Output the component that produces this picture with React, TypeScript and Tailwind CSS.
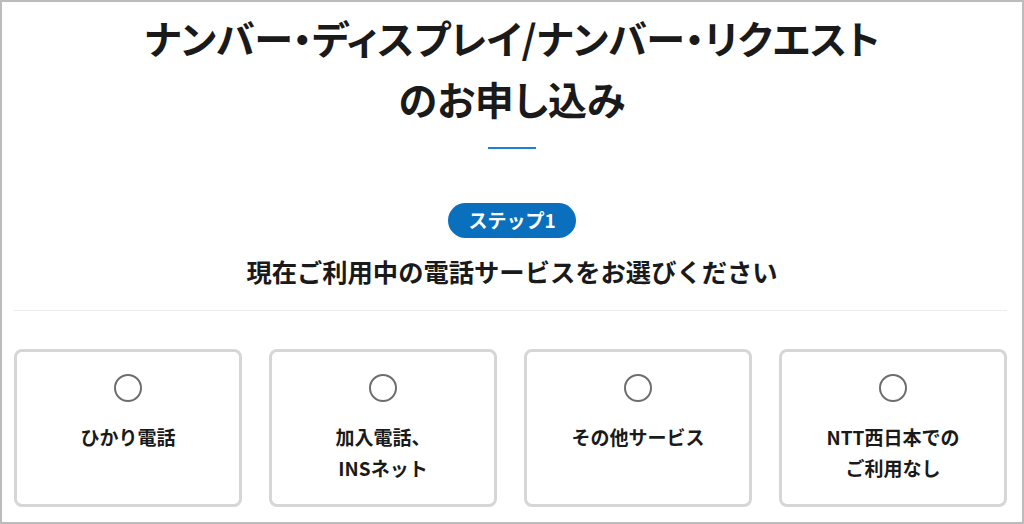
const services = [
  { id: "hikari", label: ["ひかり電話"] },
  { id: "kanyu", label: ["加入電話、", "INSネット"] },
  { id: "other", label: ["その他サービス"] },
  { id: "none", label: ["NTT西日本での", "ご利用なし"] },
];

export default function App() {
  return (
    <div
      className="w-[1024px] h-[524px] border-2 border-[#bcbcbc] bg-white text-[#1a1a1a] overflow-hidden"
      style={{ fontFamily: '"Noto Sans CJK JP", "Noto Sans", sans-serif' }}
    >
      {/* Heading */}
      <h1 className="pt-[5px] text-center text-[39px] font-bold leading-[61px] [font-feature-settings:'palt']">
        ナンバー・ディスプレイ/ナンバー・リクエスト
        <br />
        のお申し込み
      </h1>
      <div className="mx-auto mt-[18px] h-[2px] w-[48px] bg-[#1f7fcf]" />

      {/* Step */}
      <div className="mt-[54px] flex flex-col items-center">
        <span className="inline-flex h-[35px] items-center rounded-full bg-[#0a6fbd] px-[20px] text-[19px] font-bold text-white">
          ステップ1
        </span>
        <h2 className="mt-[14px] text-[25.3px] font-bold leading-[38px]">
          現在ご利用中の電話サービスをお選びください
        </h2>
      </div>

      <div className="pl-[12px] pr-[15px]">
        <div className="mt-[20px] h-px bg-[#ececec]" />

        {/* Service choices */}
        <div className="mt-[38px] grid grid-cols-4 gap-[27px]">
          {services.map((s) => (
            <label
              key={s.id}
              className="flex h-[158px] cursor-pointer flex-col items-center rounded-lg border-[3px] border-[#d6d6d6] bg-white"
            >
              <input type="radio" name="service" className="sr-only" />
              <span className="mt-[22px] h-[28px] w-[28px] rounded-full border-2 border-[#6e6e6e]" />
              <span className="mt-[19px] text-center text-[19px] font-bold leading-[31px]">
                {s.label.map((line) => (
                  <span key={line} className="block">
                    {line}
                  </span>
                ))}
              </span>
            </label>
          ))}
        </div>
      </div>
    </div>
  );
}
